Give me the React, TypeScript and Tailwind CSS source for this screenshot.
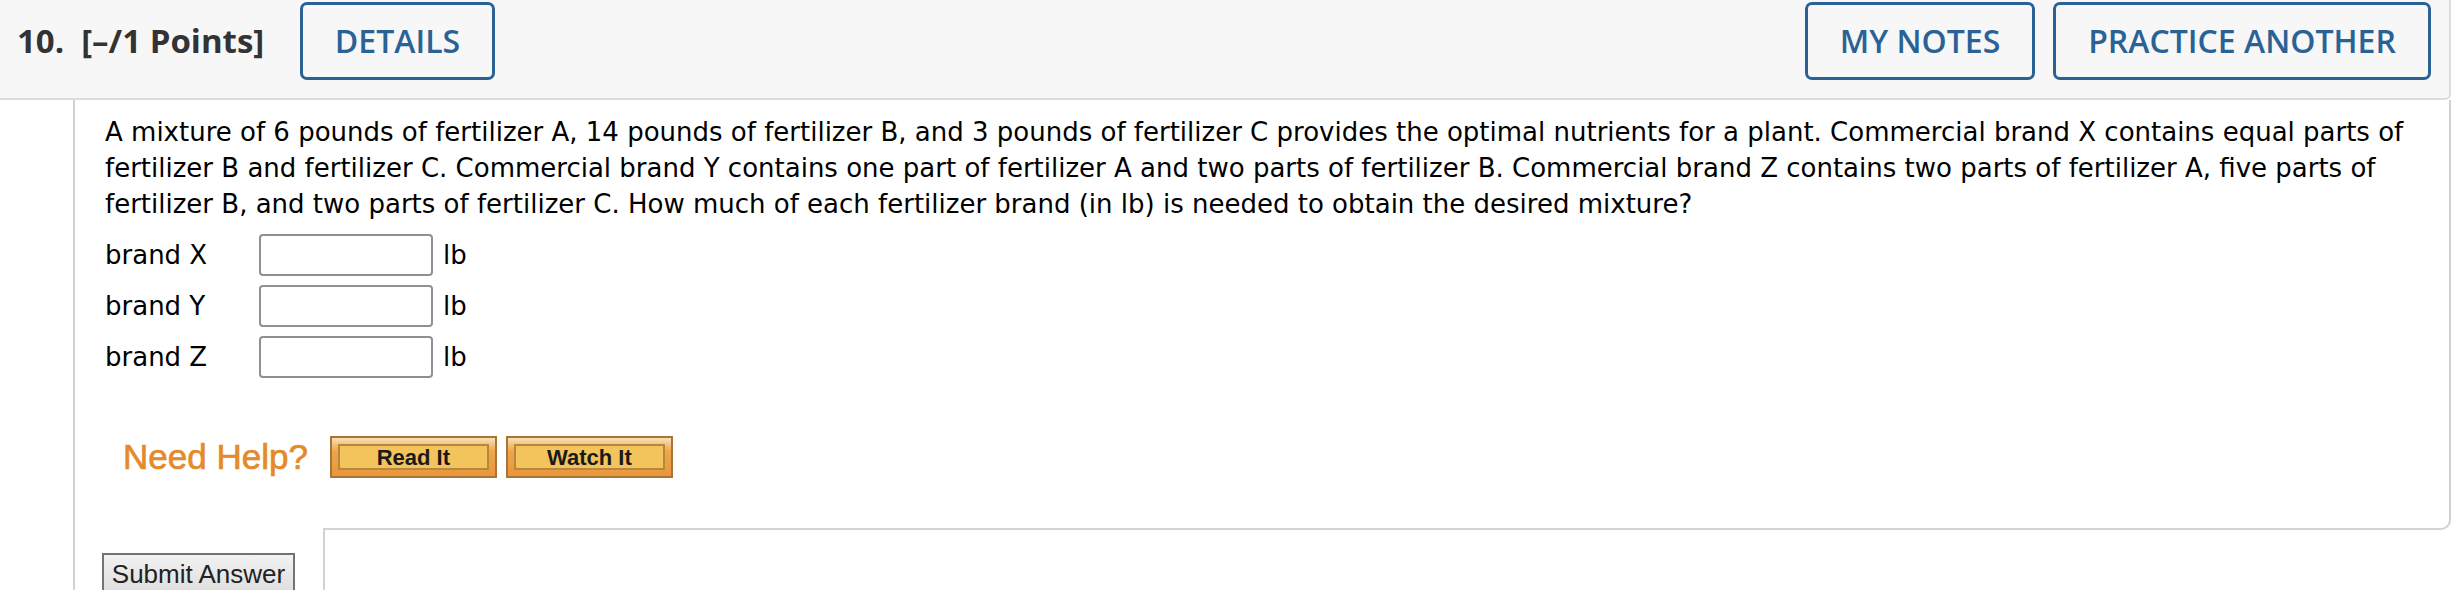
import React from "react";

function HeadBtn({ className, children }: { className: string; children: React.ReactNode }) {
  return (
    <div
      className={
        "h-[78px] shrink-0 flex items-center justify-center border-[3px] border-[#2b6296] rounded-[7px] font-['Open_Sans',sans-serif] font-semibold text-[32px] text-[#2b6296] " +
        className
      }
    >
      {children}
    </div>
  );
}

function HelpBtn({ label }: { label: string }) {
  return (
    <div className="w-[167px] h-[42px] border-2 border-[#a87538] bg-[linear-gradient(180deg,#f9e0b6_0%,#efa548_35%,#e9973b_100%)] p-[6px]">
      <div className="w-full h-full border-2 border-[#b8873f] bg-[#f3c35c] flex items-center justify-center font-['Liberation_Sans',sans-serif] font-bold text-[22px] text-[#1a1a1a]">
        {label}
      </div>
    </div>
  );
}

function Row({ label }: { label: string }) {
  return (
    <>
      <div className="h-[42px] flex items-center">{label}</div>
      <div className="h-[42px] w-[174px] border-2 border-[#8f8f94] rounded-[4px] bg-white" />
      <div className="h-[42px] flex items-center pl-[10px]">lb</div>
    </>
  );
}

export default function App() {
  return (
    <div className="min-h-[590px] bg-white font-['Liberation_Sans',sans-serif] text-black overflow-hidden">
      {/* header */}
      <div className="w-[2451px] h-[100px] bg-[#f7f7f7] border-b-2 border-r-2 border-[#dcdcdc] rounded-br-[6px] flex items-start pt-[2px] pr-[18px]">
        <div className="w-[300px] h-[78px] shrink-0 flex items-center pl-[17px] font-['Open_Sans',sans-serif] font-bold text-[33px] text-[#333333]">
          <span>10.</span>
          <span className="ml-[17px]">[–/1 Points]</span>
        </div>
        <HeadBtn className="w-[195px]">DETAILS</HeadBtn>
        <div className="flex-1" />
        <HeadBtn className="w-[230px]">MY NOTES</HeadBtn>
        <HeadBtn className="w-[378px] ml-[18px]">PRACTICE ANOTHER</HeadBtn>
      </div>

      {/* question card */}
      <div className="ml-[73px] w-[2378px] border-l-2 border-[#d2d2d2] min-h-[490px]">
        <div className="border-r-2 border-[#d2d2d2] pl-[30px] pt-[14px] pb-[42px]">
          <p className="font-['DejaVu_Sans',sans-serif] text-[26px] leading-[36px]">
            <span className="block whitespace-nowrap">
              A mixture of 6 pounds of fertilizer A, 14 pounds of fertilizer B, and 3 pounds of fertilizer C provides the optimal nutrients for a plant. Commercial brand X contains equal parts of
            </span>
            <span className="block whitespace-nowrap">
              fertilizer B and fertilizer C. Commercial brand Y contains one part of fertilizer A and two parts of fertilizer B. Commercial brand Z contains two parts of fertilizer A, five parts of
            </span>
            <span className="block whitespace-nowrap">
              fertilizer B, and two parts of fertilizer C. How much of each fertilizer brand (in lb) is needed to obtain the desired mixture?
            </span>
          </p>

          <div className="mt-[12px] grid grid-cols-[154px_174px_auto] gap-y-[9px] w-max font-['DejaVu_Sans',sans-serif] text-[26px]">
            <Row label="brand X" />
            <Row label="brand Y" />
            <Row label="brand Z" />
          </div>

          <div className="mt-[58px] ml-[18px] flex items-center h-[42px]">
            <span className="font-['Liberation_Sans',sans-serif] text-[35px] text-[#e58a2b] [-webkit-text-stroke:0.7px_#e58a2b] mr-[22px]">
              Need Help?
            </span>
            <HelpBtn label="Read It" />
            <div className="w-[9px]" />
            <HelpBtn label="Watch It" />
          </div>
        </div>

        <div className="flex">
          <div className="w-[248px] shrink-0" />
          <div className="flex-1 h-[10px] border-b-2 border-r-2 border-[#d2d2d2] rounded-br-[10px]" />
        </div>

        <div className="flex">
          <div className="w-[248px] shrink-0 pl-[27px] pt-[23px]">
            <div className="w-[193px] h-[42px] border-2 border-[#737373] bg-[linear-gradient(180deg,#f2f2f2,#dedede)] flex items-center justify-center text-[26px] text-[#222222] font-['Liberation_Sans',sans-serif]">
              Submit Answer
            </div>
          </div>
          <div className="flex-1 h-[70px] border-l-2 border-[#d2d2d2]" />
        </div>
      </div>
    </div>
  );
}
